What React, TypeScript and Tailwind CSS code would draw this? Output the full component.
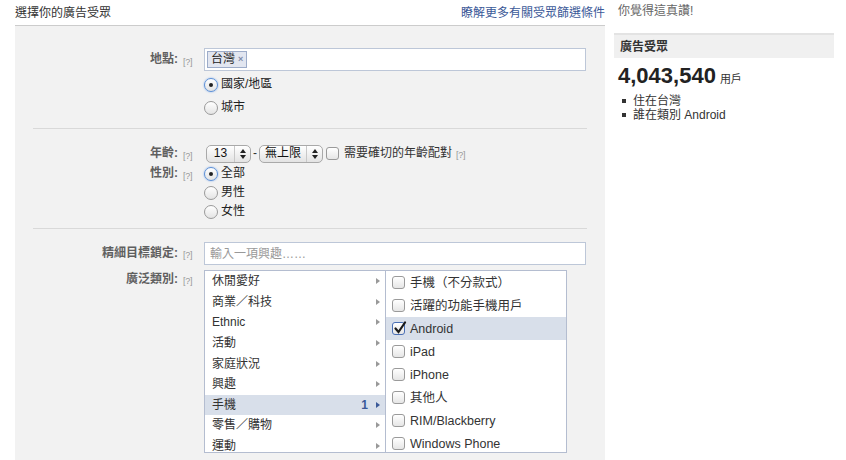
import React from 'react'

// ── Helpers ───────────────────────────────────────────────────

const FONT = { fontFamily: '"Liberation Sans", "Noto Sans CJK TC", sans-serif' }

const CATEGORIES = [
  { label: '休閒愛好' },
  { label: '商業／科技' },
  { label: 'Ethnic' },
  { label: '活動' },
  { label: '家庭狀況' },
  { label: '興趣' },
  { label: '手機', count: 1, active: true },
  { label: '零售／購物' },
  { label: '運動' },
]

const DEVICES = [
  { label: '手機（不分款式）' },
  { label: '活躍的功能手機用戶' },
  { label: 'Android', checked: true },
  { label: 'iPad' },
  { label: 'iPhone' },
  { label: '其他人' },
  { label: 'RIM/Blackberry' },
  { label: 'Windows Phone' },
]

function Help() {
  return <span className="text-[9px] text-[#999] tracking-tight">[?]</span>
}

function Radio({ checked, label }: { checked?: boolean; label: string }) {
  return (
    <div className="flex items-center gap-[3px] h-full">
      <span
        className={`w-[14px] h-[14px] rounded-full border flex items-center justify-center bg-gradient-to-b from-white to-[#e4e4e4] ${
          checked ? 'border-[#5b8fd6] shadow-[0_0_2px_#7aa7e8]' : 'border-[#9a9a9a]'
        }`}
      >
        {checked && <span className="w-[4px] h-[4px] rounded-full bg-[#222]" />}
      </span>
      <span className="text-[12px] text-[#222]">{label}</span>
    </div>
  )
}

function Checkbox({ checked }: { checked?: boolean }) {
  return (
    <span
      className={`relative block w-[13px] h-[13px] rounded-[3px] border bg-gradient-to-b from-white to-[#e6e6e6] shrink-0 ${
        checked ? 'border-[#4a6fb5]' : 'border-[#9a9a9a]'
      }`}
    >
      {checked && (
        <svg viewBox="0 0 14 14" className="absolute -top-[2px] left-0 w-[14px] h-[14px]">
          <path d="M2.5 7.5 L5.5 11 L12 1.5" fill="none" stroke="#1a1a1a" strokeWidth="2.2" strokeLinecap="round" />
        </svg>
      )}
    </span>
  )
}

function Select({ value, width }: { value: string; width: string }) {
  return (
    <div
      className={`${width} h-[18px] flex items-center rounded-[5px] border border-[#a9a9a9] bg-gradient-to-b from-white to-[#e3e3e3] text-[12px] text-[#111]`}
    >
      <span className="flex-1 text-center">{value}</span>
      <span className="w-[16px] h-full border-l border-[#c8c8c8] flex items-center justify-center">
        <svg viewBox="0 0 6 10" className="w-[6px] h-[10px]">
          <path d="M0 4 L3 0 L6 4 Z M0 6 L3 10 L6 6 Z" fill="#222" />
        </svg>
      </span>
    </div>
  )
}

function Row({ label, children, className = '' }: { label?: string; children: React.ReactNode; className?: string }) {
  return (
    <div className={`flex ${className}`}>
      <div className="w-[163px] text-right text-[12px] font-bold text-[#5f5f5f] leading-[inherit]">
        {label && `${label}:`}
      </div>
      <div className="w-[26px] pl-[5px] leading-[inherit]">{label && <Help />}</div>
      <div className="flex-1">{children}</div>
    </div>
  )
}

// ── Component ─────────────────────────────────────────────────

export default function App() {
  return (
    <div className="w-[846px] h-[460px] overflow-hidden bg-white flex text-[#333]" style={FONT}>
      {/* left column */}
      <div className="ml-[15px] w-[590px]">
        <div className="h-[26px] flex items-center justify-between border-b border-[#cccccc] text-[12px]">
          <span className="text-[#333]">選擇你的廣告受眾</span>
          <span className="text-[#3b5998]">瞭解更多有關受眾篩選條件</span>
        </div>

        <div className="bg-[#f2f2f2] h-[440px]">
          {/* location */}
          <div className="pt-[22px] pb-[9px] mx-[18px] border-b border-[#d9d9d9]">
            <Row label="地點" className="-ml-[18px] leading-[23px]">
              <div className="w-[382px] h-[23px] border border-[#bdc7d8] bg-white flex items-center pl-[2px]">
                <span className="h-[17px] px-[3px] flex items-center gap-[3px] bg-[#e2e6f0] border border-[#9dacc9] text-[12px] text-[#222]">
                  台灣<span className="text-[9px] text-[#7d8aa8] font-bold">×</span>
                </span>
              </div>
              <div className="h-[23px] mt-[2px]"><Radio checked label="國家/地區" /></div>
              <div className="h-[23px]"><Radio label="城市" /></div>
            </Row>
          </div>

          {/* age and gender */}
          <div className="pt-[15px] pb-[7px] mx-[18px] border-b border-[#d9d9d9]">
            <Row label="年齡" className="-ml-[18px] leading-[19px] h-[20px]">
              <div className="flex items-center h-[19px] pl-[2px]">
                <Select value="13" width="w-[45px]" />
                <span className="px-[2px] text-[12px]">-</span>
                <Select value="無上限" width="w-[64px]" />
                <span className="ml-[3px]"><Checkbox /></span>
                <span className="ml-[5px] text-[12px] text-[#333]">需要確切的年齡配對</span>
                <span className="ml-[4px]"><Help /></span>
              </div>
            </Row>
            <Row label="性別" className="-ml-[18px] leading-[19px]">
              <div className="h-[19px]"><Radio checked label="全部" /></div>
              <div className="h-[19px]"><Radio label="男性" /></div>
              <div className="h-[19px]"><Radio label="女性" /></div>
            </Row>
          </div>

          {/* interests */}
          <div className="pt-[13px]">
            <Row label="精細目標鎖定" className="leading-[22px]">
              <div className="w-[382px] h-[23px] border border-[#bdc7d8] bg-white flex items-center pl-[5px] text-[12px] text-[#999]">
                輸入一項興趣……
              </div>
            </Row>
            <Row label="廣泛類別" className="mt-[4px] leading-[18px]">
              <div className="w-[363px] h-[183px] border border-[#b4bdd0] bg-white flex overflow-hidden">
                <div className="w-[181px] border-r border-[#b4bdd0]">
                  {CATEGORIES.map(c => (
                    <div
                      key={c.label}
                      className={`h-[20.6px] flex items-center pl-[7px] pr-[5px] text-[12px] text-[#333] ${c.active ? 'bg-[#d8dfea]' : ''}`}
                    >
                      <span className="flex-1">{c.label}</span>
                      {c.count && <span className="mr-[8px] font-bold text-[#3b5998]">{c.count}</span>}
                      <svg viewBox="0 0 4 6" className="w-[4px] h-[6px]">
                        <path d="M0 0 L4 3 L0 6 Z" fill={c.active ? '#3b5998' : '#999'} />
                      </svg>
                    </div>
                  ))}
                </div>
                <div className="flex-1">
                  {DEVICES.map(d => (
                    <div
                      key={d.label}
                      className={`h-[23px] flex items-center gap-[5px] pl-[6px] text-[12.5px] text-[#333] ${d.checked ? 'bg-[#d8dfea]' : ''}`}
                    >
                      <Checkbox checked={d.checked} />
                      <span>{d.label}</span>
                    </div>
                  ))}
                </div>
              </div>
            </Row>
          </div>
        </div>
      </div>

      {/* right column */}
      <div className="ml-[9px] w-[220px]">
        <div className="h-[21px] pl-[4px] flex items-center text-[12px] text-[#666]">你覺得這真讚!</div>
        <div className="mt-[12px] h-[25px] border-t-2 border-[#e3e3e3] bg-[#f0f0f0] flex items-center pl-[6px] text-[12px] font-bold text-[#333]">
          廣告受眾
        </div>
        <div className="pl-[4px] pt-[4px] flex items-baseline gap-[4px]">
          <span className="text-[22px] font-bold text-[#222] leading-[28px]">4,043,540</span>
          <span className="text-[11px] text-[#333]">用戶</span>
        </div>
        <ul className="pl-[8px] pt-[4px] text-[12px] text-[#333] leading-[14px]">
          <li className="flex items-center gap-[7px]"><span className="w-[4px] h-[4px] bg-[#333]" />住在台灣</li>
          <li className="flex items-center gap-[7px]"><span className="w-[4px] h-[4px] bg-[#333]" />誰在類別 Android</li>
        </ul>
      </div>
    </div>
  )
}
